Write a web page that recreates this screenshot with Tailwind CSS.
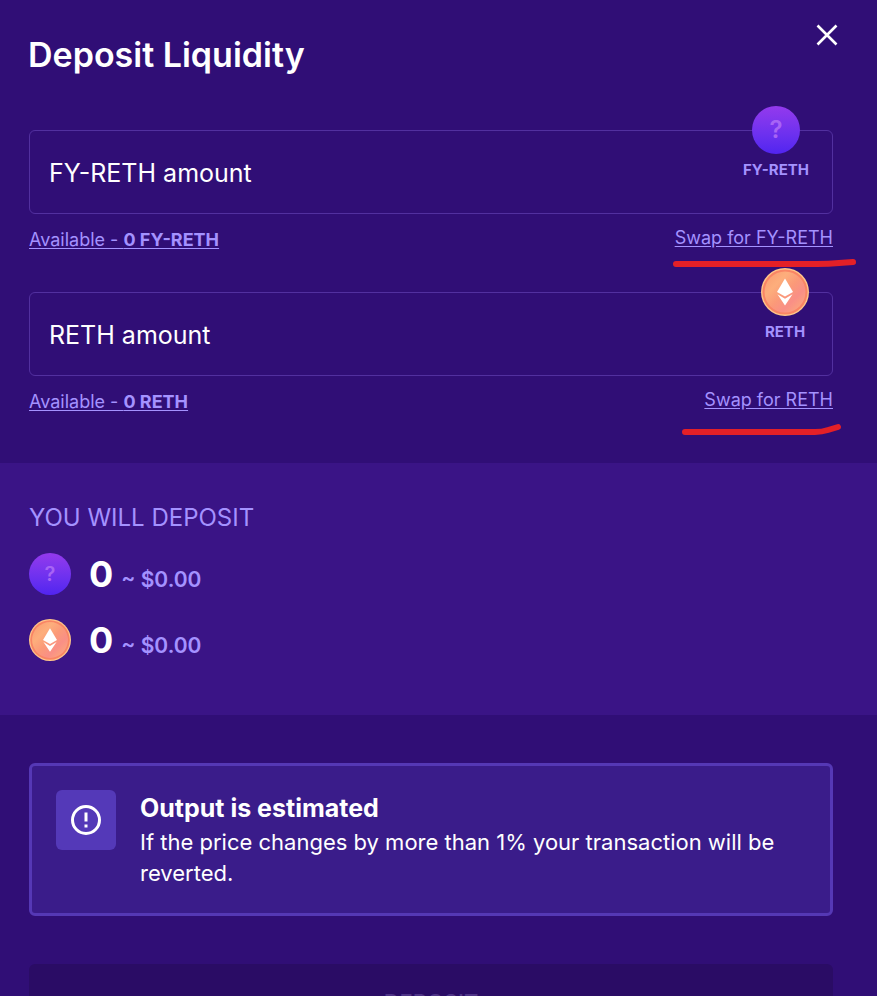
<!DOCTYPE html>
<html lang="en">
<head>
<meta charset="UTF-8">
<meta name="viewport" content="width=device-width, initial-scale=1.0">
<title>Deposit Liquidity</title>
<script src="https://cdn.jsdelivr.net/npm/@tailwindcss/browser@4"></script>
</head>
<body class="min-h-screen bg-[#300e76] font-['Inter',sans-serif] text-white">

<!-- Shared coin artwork -->
<svg class="absolute h-0 w-0" aria-hidden="true">
  <defs>
    <linearGradient id="coinFill" x1="0" y1="0" x2="1" y2="1">
      <stop offset="0" stop-color="#fb9a70"/>
      <stop offset="0.3" stop-color="#fdae7c"/>
      <stop offset="0.5" stop-color="#fb9a78"/>
      <stop offset="0.7" stop-color="#f98f86"/>
      <stop offset="1" stop-color="#fdb078"/>
    </linearGradient>
    <symbol id="ethCoin" viewBox="0 0 48 48">
      <circle cx="24" cy="24" r="24" fill="#ffc78a"/>
      <circle cx="24" cy="24" r="22.6" fill="#f98565"/>
      <circle cx="24" cy="24" r="20.5" fill="url(#coinFill)"/>
      <path d="M24 10.5 L32 24 L24 28.5 L16 24 Z" fill="#fff"/>
      <path d="M16.5 26.2 L24 30.8 L31.5 26.2 L24 37.5 Z" fill="#fff"/>
    </symbol>
  </defs>
</svg>

<header class="flex items-start justify-between pt-6 pr-[39px] pl-7">
  <h1 class="pt-2 text-[34px] leading-[46px] font-semibold">Deposit Liquidity</h1>
  <button type="button" aria-label="Close">
    <svg class="h-[22px] w-[22px]" viewBox="0 0 22 22" fill="none" stroke="#fff" stroke-width="2.6"><path d="M1.5 1.5 L20.5 20.5 M20.5 1.5 L1.5 20.5"/></svg>
  </button>
</header>

<main>
  <form class="pt-[52px] pr-11 pb-[49px] pl-[29px]">
    <div class="relative">
      <input type="text" aria-label="FY-RETH amount" placeholder="FY-RETH amount" class="block h-[84px] w-full rounded-md border border-[#52309f] bg-transparent pt-0.5 pr-28 pl-[19px] text-[25px] placeholder:text-white placeholder:opacity-100 focus:outline-none">
      <div class="absolute -top-6 right-6 flex flex-col items-center">
        <span class="flex h-12 w-12 items-center justify-center rounded-full bg-linear-to-b from-[#9439ed] to-[#5124f0] text-2xl font-semibold text-[#a764f5]">?</span>
        <span class="mt-1.5 text-[15px] leading-5 font-bold text-[#a492ff]">FY-RETH</span>
      </div>
    </div>
    <div class="relative flex items-start justify-between pt-3 text-lg leading-6 text-[#a492ff]">
      <a href="#" class="pt-0.5 underline underline-offset-2">Available - <b>0 FY-RETH</b></a>
      <a href="#" class="underline underline-offset-2">Swap for FY-RETH</a>
      <svg class="absolute top-[42px] -right-7 h-4 w-[190px]" viewBox="0 0 190 16" fill="none" stroke="#e42027" stroke-width="6" stroke-linecap="round" stroke-linejoin="round" aria-hidden="true"><path d="M5 8 H146 Q158 8 168 7 L182 6"/></svg>
    </div>

    <div class="relative mt-10">
      <input type="text" aria-label="RETH amount" placeholder="RETH amount" class="block h-[84px] w-full rounded-md border border-[#52309f] bg-transparent pt-0.5 pr-28 pl-[19px] text-[25px] placeholder:text-white placeholder:opacity-100 focus:outline-none">
      <div class="absolute -top-6 right-6 flex flex-col items-center">
        <svg class="h-12 w-12" aria-hidden="true"><use href="#ethCoin"/></svg>
        <span class="mt-1.5 text-[15px] leading-5 font-bold text-[#a492ff]">RETH</span>
      </div>
    </div>
    <div class="relative flex items-start justify-between pt-3 text-lg leading-6 text-[#a492ff]">
      <a href="#" class="pt-0.5 underline underline-offset-2">Available - <b>0 RETH</b></a>
      <a href="#" class="underline underline-offset-2">Swap for RETH</a>
      <svg class="absolute top-[46px] -right-3 h-4 w-[166px]" viewBox="0 0 166 16" fill="none" stroke="#e42027" stroke-width="6" stroke-linecap="round" stroke-linejoin="round" aria-hidden="true"><path d="M6 10 H136 Q143 10 149 8 L159 5"/></svg>
    </div>
  </form>

  <section class="bg-[#3a1486] pt-9 pr-11 pb-[54px] pl-[29px]">
    <h2 class="text-2xl leading-[38px] text-[#a492ff]">YOU WILL DEPOSIT</h2>
    <div class="mt-4 flex flex-col gap-6">
      <div class="flex h-[42px] items-center">
        <span class="flex h-[42px] w-[42px] items-center justify-center rounded-full bg-linear-to-b from-[#9439ed] to-[#5124f0] text-xl font-semibold text-[#a764f5]">?</span>
        <p class="flex items-baseline gap-2 pt-0.5 pl-[18px]"><span class="text-4xl font-bold">0</span><span class="text-[21px] font-semibold text-[#a492ff]">~ $0.00</span></p>
      </div>
      <div class="flex h-[42px] items-center">
        <svg class="h-[42px] w-[42px]" aria-hidden="true"><use href="#ethCoin"/></svg>
        <p class="flex items-baseline gap-2 pt-0.5 pl-[18px]"><span class="text-4xl font-bold">0</span><span class="text-[21px] font-semibold text-[#a492ff]">~ $0.00</span></p>
      </div>
    </div>
  </section>

  <section class="pt-12 pr-11 pl-[29px]">
    <div class="flex items-start gap-6 rounded-md border-3 border-[#5538b5] bg-[#3a1c8a] p-6">
      <div class="flex h-[60px] w-[60px] shrink-0 items-center justify-center rounded-md bg-[#5439b8]">
        <svg class="h-[30px] w-[30px]" viewBox="0 0 30 30" fill="none" stroke="#fff" stroke-width="3" aria-hidden="true"><circle cx="15" cy="15" r="13.5"/><path d="M15 7.5 V16.5 M15 19.5 V22.5"/></svg>
      </div>
      <div>
        <h3 class="text-[25px] leading-[37px] font-bold">Output is estimated</h3>
        <p class="text-[22px] leading-[31px]">If the price changes by more than 1% your transaction will be reverted.</p>
      </div>
    </div>
    <button type="button" disabled class="mt-12 h-[76px] w-full rounded-md bg-[#2a0c65] text-[22px] font-medium text-[#4f3487]">DEPOSIT</button>
  </section>
</main>

</body>
</html>
